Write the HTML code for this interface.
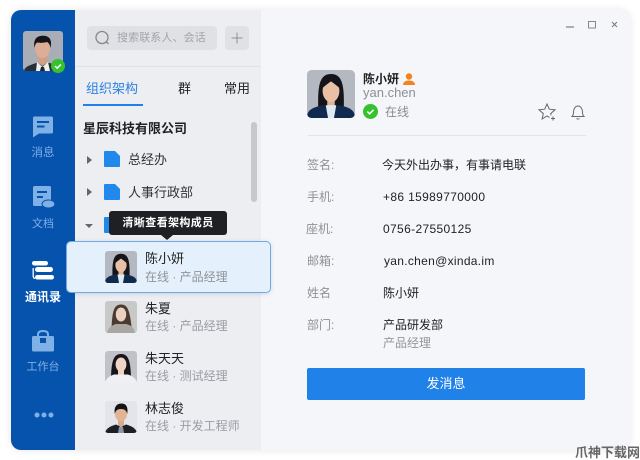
<!DOCTYPE html>
<html><head><meta charset="utf-8"><style>
*{box-sizing:border-box;margin:0;padding:0}
html,body{width:640px;height:460px;overflow:hidden;background:#fff}
body{font-family:"Liberation Sans","Noto Sans CJK SC",sans-serif;position:relative}
.t{position:absolute;white-space:nowrap;line-height:16px;font-size:12px;color:#222}
.g{color:#9a9ca2}
.l{color:#8f9196;font-size:12px}
.v{color:#222;font-size:12px}
svg{position:absolute;display:block}
.nav{position:absolute;left:11px;width:64px;text-align:center;font-size:11px;color:#7fb0e6;line-height:14px}
.ar{position:absolute;width:0;height:0;border-left:5px solid #666;border-top:4px solid transparent;border-bottom:4px solid transparent}
</style></head><body>
<svg width="0" height="0" style="position:absolute"><defs>
<clipPath id="c32"><rect width="32" height="32" rx="3"/></clipPath>
<g id="woman"><rect width="32" height="32" fill="#b4b8c0"/><path d="M7.500 26C7 10 8.500 2.700 16 2.700S25 10 24.500 26z" fill="#15141a"/><path d="M13.500 19h5v6h-5z" fill="#e0b49a"/><ellipse cx="16" cy="14" rx="5.600" ry="7.400" fill="#e9bfa6"/><path d="M10.300 12c.5-3.500 2.500-5.400 5.700-5.600 3.200.2 5.200 2.100 5.700 5.600-2-1.600-4-3.400-5.700-4.400-1.700 1-3.700 2.800-5.700 4.400z" fill="#15141a"/><path d="M0 32c0-5 3-7 10.500-8.500L16 25l5.500-1.500C29 25 32 27 32 32z" fill="#10294f"/><path d="M12.500 23.500h7L18 32h-4z" fill="#dfeaf2"/></g>
</defs></svg>

<!-- window -->
<div style="position:absolute;left:11px;top:10px;width:619px;height:440px;border-radius:10px;overflow:hidden;background:#f5f6f9;box-shadow:0 0 8px rgba(0,0,0,.1)">
  <div style="position:absolute;left:0;top:0;width:64px;height:440px;background:#0653ae"></div>
  <div style="position:absolute;left:64px;top:0;width:186px;height:440px;background:#eceef2"></div>
  <div style="position:absolute;left:64px;top:56px;width:186px;height:1px;background:#e0e2e7"></div>
  <div style="position:absolute;left:240px;top:112px;width:6px;height:80px;border-radius:3px;background:#c6c8cc"></div>
</div>

<!-- sidebar -->
<svg style="left:23px;top:31px" width="40" height="40" viewBox="0 0 40 40"><defs><clipPath id="c40"><rect width="40" height="40" rx="3"/></clipPath></defs><g clip-path="url(#c40)"><rect width="40" height="40" fill="#a9adb5"/><path d="M1 40c1-5 7-6 12-8h14c5 2 11 3 12 8z" fill="#2a2e36"/><path d="M15 24h9v8l-4.500 3L15 32z" fill="#cf9f86"/><path d="M14 31l5.500 5 5.500-5 2 9H13z" fill="#eef0f2"/><path d="M18 36h3l1 4h-5z" fill="#1d2433"/><ellipse cx="19.500" cy="17" rx="7.500" ry="10" fill="#dcae95"/><path d="M11.500 17C10 8 14 4.800 20 4.800s9.500 3.500 7.500 12.200c-.5-3-1.500-5-3.500-6-3 1-8 1-10 .5-1.500 1.200-2.200 3-2.500 5.500z" fill="#16151a"/></g></svg>
<svg style="left:51px;top:59px" width="14" height="14" viewBox="0 0 15 15"><circle cx="7.500" cy="7.500" r="7.500" fill="#37c12e"/><path d="M4.300 7.600l2.300 2.200 4-4" fill="none" stroke="#fff" stroke-width="1.600"/></svg>

<svg style="left:32px;top:116px" width="22" height="22" viewBox="0 0 22 22"><path d="M1 2a1.500 1.500 0 0 1 1.500-1.500h17A1.500 1.500 0 0 1 21 2v14a1.500 1.500 0 0 1-1.500 1.500H7L1 21.500z" fill="#7fb0e6"/><path d="M5 6h12M5 10.500h7.500" stroke="#0653ae" stroke-width="2"/></svg>
<div class="nav" style="top:146px;font-size:11.500px">消息</div>
<svg style="left:33px;top:186px" width="22" height="24" viewBox="0 0 22 24"><path d="M1.500 0h15A1.500 1.500 0 0 1 18 1.500V20H1.500A1.500 1.500 0 0 1 0 18.500V1.500A1.500 1.500 0 0 1 1.500 0z" fill="#7fb0e6"/><path d="M4 6h10M4 11h6" stroke="#0653ae" stroke-width="2"/><ellipse cx="15.500" cy="18" rx="6.500" ry="4" fill="#7fb0e6" stroke="#0653ae"/></svg>
<div class="nav" style="top:217px">文档</div>
<svg style="left:32px;top:260px" width="23" height="21" viewBox="0 0 23 21"><rect x="0" y="1" width="16" height="4.500" rx="2.200" fill="#fff"/><rect x="3" y="7" width="18" height="5" rx="2.500" fill="#fff"/><rect x="3" y="15" width="19" height="4.500" rx="2.200" fill="#fff"/><path d="M1.200 8v8c0 1.500.6 2.200 1.800 2.500" fill="none" stroke="#fff" stroke-width="1.300"/></svg>
<div class="nav" style="top:290px;color:#fff;font-weight:bold;font-size:12px">通讯录</div>
<svg style="left:32px;top:330px" width="22" height="22" viewBox="0 0 22 22"><path d="M6 6V4.500C6 2 8 1 11 1s5 1 5 3.500V6" fill="none" stroke="#7fb0e6" stroke-width="2"/><path d="M1.500 6h19A1.500 1.500 0 0 1 22 7.500V20a1.500 1.500 0 0 1-1.500 1.500h-19A1.500 1.500 0 0 1 0 20V7.500A1.500 1.500 0 0 1 1.500 6z" fill="#7fb0e6"/><rect x="8" y="8" width="6" height="5" fill="#0653ae"/></svg>
<div class="nav" style="top:360px">工作台</div>
<svg style="left:33px;top:411px" width="22" height="8" viewBox="0 0 22 8"><circle cx="4" cy="4" r="2.500" fill="#7fb0e6"/><circle cx="11" cy="4" r="2.500" fill="#7fb0e6"/><circle cx="18" cy="4" r="2.500" fill="#7fb0e6"/></svg>

<!-- search -->
<div style="position:absolute;left:87px;top:26px;width:130px;height:24px;border-radius:4px;background:#dfe1e5"></div>
<svg style="left:94px;top:29px" width="18" height="18" viewBox="0 0 18 18"><circle cx="8" cy="8.500" r="6" fill="none" stroke="#85878c" stroke-width="1.300"/><path d="M12.500 13l2 2" stroke="#85878c" stroke-width="1.300"/></svg>
<div class="t" style="left:117px;top:30px;font-size:11px;color:#a2a4a9;letter-spacing:.1px">搜索联系人、会话</div>
<div style="position:absolute;left:225px;top:26px;width:24px;height:24px;border-radius:4px;background:#dfe1e5"></div>
<svg style="left:231px;top:32px" width="12" height="12" viewBox="0 0 12 12"><path d="M6 .5v11M.5 6h11" stroke="#8e9095" stroke-width="1"/></svg>

<!-- tabs -->
<div class="t" style="left:86px;top:81px;color:#2c80e0;font-size:13px">组织架构</div>
<div class="t" style="left:178px;top:81px;color:#222;font-size:13px">群</div>
<div class="t" style="left:224px;top:81px;color:#222;font-size:13px">常用</div>
<div style="position:absolute;left:83px;top:104px;width:60px;height:2px;background:#1f82ec"></div>

<div class="t" style="left:83px;top:121px;font-weight:bold;color:#222;font-size:13px">星辰科技有限公司</div>
<div class="ar" style="left:87px;top:156px"></div>
<svg style="left:104px;top:151px" width="16" height="16" viewBox="0 0 16 16"><path d="M1 0h10l5 5v10a1 1 0 0 1-1 1H1a1 1 0 0 1-1-1V1a1 1 0 0 1 1-1z" fill="#2189ec"/></svg>
<div class="t" style="left:128px;top:152px;color:#333;font-size:13px">总经办</div>
<div class="ar" style="left:87px;top:188px"></div>
<svg style="left:104px;top:184px" width="16" height="16" viewBox="0 0 16 16"><path d="M1 0h10l5 5v10a1 1 0 0 1-1 1H1a1 1 0 0 1-1-1V1a1 1 0 0 1 1-1z" fill="#2189ec"/></svg>
<div class="t" style="left:128px;top:185px;color:#333;font-size:13px">人事行政部</div>
<div style="position:absolute;left:85px;top:224px;width:0;height:0;border-top:4px solid #666;border-left:4px solid transparent;border-right:4px solid transparent"></div>
<div style="position:absolute;left:104px;top:217px;width:16px;height:16px;background:#2189ec;border-radius:1px"></div>

<!-- list -->
<svg style="left:105px;top:301px" width="32" height="32" viewBox="0 0 32 32"><g clip-path="url(#c32)"><rect width="32" height="32" fill="#c9c8c8"/><path d="M6.500 29C7 10 9 3.500 16 3.500S25 10 27 30z" fill="#4a3a31"/><ellipse cx="16" cy="13.500" rx="5.200" ry="7" fill="#ecd0c0"/><path d="M2 32c1-6 6-8 9-9h10c4 1 8 3 9 9z" fill="#a9a79f"/></g></svg>
<div class="t" style="left:145px;top:301px;font-size:13px;color:#222">朱夏</div>
<div class="t g" style="left:145px;top:318px">在线 · 产品经理</div>
<svg style="left:105px;top:351px" width="32" height="32" viewBox="0 0 32 32"><g clip-path="url(#c32)"><rect width="32" height="32" fill="#c0c2c8"/><path d="M6 26C6.500 9 9 3 16 3s9.500 6 10 23z" fill="#17151a"/><path d="M13 19h6v5h-6z" fill="#ecd0c0"/><ellipse cx="16" cy="13.500" rx="5.400" ry="7" fill="#f0d4c6"/><path d="M0 32c1-5 5-7 9-8.500h14c4 1.500 8 3.500 9 8.500z" fill="#eef0f3"/></g></svg>
<div class="t" style="left:145px;top:351px;font-size:13px;color:#222">朱天天</div>
<div class="t g" style="left:145px;top:368px">在线 · 测试经理</div>
<svg style="left:105px;top:401px" width="32" height="32" viewBox="0 0 32 32"><g clip-path="url(#c32)"><rect width="32" height="32" fill="#e3e5ea"/><path d="M13 18h6v7h-6z" fill="#d9a98c"/><path d="M0 32c1-5 6-7 11-8.500l5 2.500 5-2.500c5 1.500 10 3.500 11 8.500z" fill="#1e1f24"/><path d="M14 26h4l1 6h-6z" fill="#8d96a5"/><ellipse cx="16" cy="13" rx="6" ry="7.500" fill="#e2b496"/><path d="M9.800 13C8.500 5 12.500 2.500 16.500 2.500S23.500 5 22.200 13c-.8-3.500-2.500-5-6.200-5s-5.400 1.500-6.200 5z" fill="#141316"/></g></svg>
<div class="t" style="left:145px;top:401px;font-size:13px;color:#222">林志俊</div>
<div class="t g" style="left:145px;top:418px">在线 · 开发工程师</div>

<!-- highlighted row -->
<div style="position:absolute;left:66px;top:241px;width:205px;height:52px;background:#e4f1fc;border:1px solid #72a9e2;border-radius:5px;box-shadow:0 1px 5px rgba(50,80,120,.18)"></div>
<svg style="left:105px;top:251px" width="32" height="32" viewBox="0 0 32 32"><g clip-path="url(#c32)"><use href="#woman"/></g></svg>
<div class="t" style="left:145px;top:251px;font-size:13px;color:#222">陈小妍</div>
<div class="t g" style="left:145px;top:269px;color:#8f9298">在线 · 产品经理</div>

<!-- tooltip -->
<div style="position:absolute;left:109px;top:211px;width:118px;height:24px;background:#1f2023;border-radius:3px;color:#fff;font-size:11px;font-weight:bold;line-height:24px;text-align:center;letter-spacing:.4px">清晰查看架构成员</div>
<div style="position:absolute;left:161px;top:235px;width:0;height:0;border-top:5px solid #1f2023;border-left:6px solid transparent;border-right:6px solid transparent"></div>

<!-- window controls -->
<svg style="left:564px;top:18px" width="60" height="14" viewBox="0 0 60 14"><path d="M2 9h8" stroke="#666" stroke-width="1"/><rect x="24.500" y="3.500" width="7" height="6.500" fill="none" stroke="#888" stroke-width="1"/><path d="M48 4l5 5M53 4l-5 5" stroke="#777" stroke-width="1"/></svg>

<!-- profile -->
<svg style="left:307px;top:70px" width="48" height="48" viewBox="0 0 32 32"><g clip-path="url(#c32)"><use href="#woman"/></g></svg>
<div class="t" style="left:363px;top:71px;font-weight:bold;color:#222">陈小妍</div>
<svg style="left:402px;top:72px" width="14" height="14" viewBox="0 0 14 14"><circle cx="7" cy="4.500" r="3.200" fill="#f58220"/><path d="M1 13c0-3 2.500-4.500 6-4.500s6 1.500 6 4.500z" fill="#f58220"/></svg>
<div class="t" style="left:363px;top:85px;color:#8c8f95;font-size:13px">yan.chen</div>
<svg style="left:363px;top:104px" width="15" height="15" viewBox="0 0 15 15"><circle cx="7.500" cy="7.500" r="7.500" fill="#37c12e"/><path d="M4.300 7.600l2.300 2.200 4-4" fill="none" stroke="#fff" stroke-width="1.600"/></svg>
<div class="t g" style="left:385px;top:104px;color:#888b90">在线</div>
<svg style="left:538px;top:103px" width="18" height="18" viewBox="0 0 18 18"><path d="M11.500 14.400L9 13l-4.900 3 1.200-5.400L1 6.800l5.700-.6L9 1l2.300 5.200 5.700.6-4.300 3.800.4 1.600" fill="none" stroke="#666" stroke-width="1"/><path d="M13 15.500h4M15 13.500v4" stroke="#666" stroke-width="1"/></svg>
<svg style="left:571px;top:104px" width="14" height="16" viewBox="0 0 14 16"><path d="M1 12.500c1.200-1 1.500-2 1.500-4.500 0-3 1.800-6 4.500-6s4.500 3 4.500 6c0 2.500.3 3.500 1.500 4.500z" fill="none" stroke="#666" stroke-width="1"/><path d="M5.500 14.500c.8.700 2.200.7 3 0" fill="none" stroke="#666" stroke-width="1"/></svg>
<div style="position:absolute;left:308px;top:135px;width:278px;height:1px;background:#e2e4e8"></div>

<div class="t l" style="left:307px;top:157px">签名:</div>
<div class="t v" style="left:382px;top:157px">今天外出办事，有事请电联</div>
<div class="t l" style="left:307px;top:189px">手机:</div>
<div class="t v" style="left:383px;top:189px;letter-spacing:.35px">+86 15989770000</div>
<div class="t l" style="left:306px;top:221px">座机:</div>
<div class="t v" style="left:383px;top:221px;letter-spacing:.35px">0756-27550125</div>
<div class="t l" style="left:307px;top:253px">邮箱:</div>
<div class="t v" style="left:384px;top:253px;letter-spacing:.3px">yan.chen@xinda.im</div>
<div class="t l" style="left:307px;top:285px">姓名</div>
<div class="t v" style="left:383px;top:285px">陈小妍</div>
<div class="t l" style="left:307px;top:317px">部门:</div>
<div class="t v" style="left:383px;top:317px">产品研发部</div>
<div class="t g" style="left:383px;top:335px;color:#94969b">产品经理</div>
<div style="position:absolute;left:307px;top:368px;width:278px;height:32px;background:#2081e8;border-radius:2px;color:#fff;text-align:center;line-height:32px;font-size:13px">发消息</div>

<!-- watermark -->
<div class="t" style="left:575px;top:446px;font-size:13px;line-height:14px;font-weight:bold;color:#666;letter-spacing:0">爪神下载网</div>
</body></html>
